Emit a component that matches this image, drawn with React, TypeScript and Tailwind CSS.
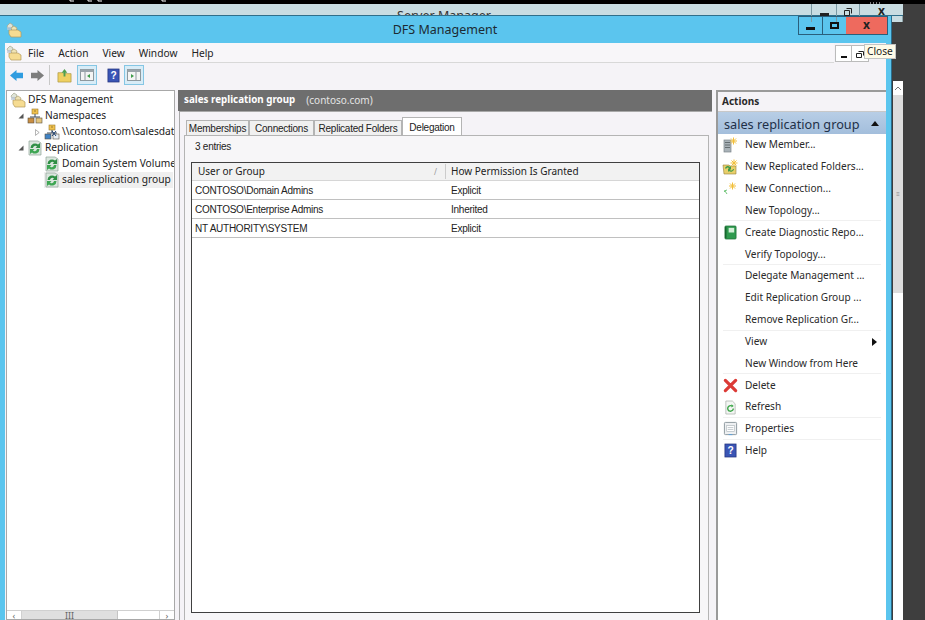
import React from 'react';

const FolderStack = ({ className = '' }: { className?: string }) => (
  <svg viewBox="0 0 16 16" className={`w-4 h-4 shrink-0 ${className}`}>
    <path d="M1 4l3-3 3 2-1 3H2z" fill="#dfe4d8" stroke="#a3a58c" strokeWidth="0.7" />
    <path d="M5 6l3-2 3 2-1 3H6z" fill="#efe3b4" stroke="#b0a274" strokeWidth="0.7" />
    <path d="M3 8h9l3 2v5H5l-2-3z" fill="#f6dc92" stroke="#b39a5c" strokeWidth="0.7" />
    <path d="M1 5h4v3H1z" fill="#b9c6d6" opacity="0.7" />
  </svg>
);

const NamespaceIcon = ({ small = false }: { small?: boolean }) => (
  <svg viewBox="0 0 16 16" className="w-4 h-4 shrink-0">
    <rect x="5" y="1" width="6" height="5" fill="#f0c24f" stroke="#9b7b2d" strokeWidth="0.6" />
    <path d="M7 3h2" stroke="#7a5f20" strokeWidth="0.7" />
    <path d="M8 6v3M3 9h10" stroke="#3a4a5c" strokeWidth="1" />
    <rect x="1" y="10" width="6" height="5" fill={small ? '#3f83c6' : '#c98e42'} stroke="#5a5040" strokeWidth="0.6" />
    <rect x="9" y="10" width="6" height="5" fill={small ? '#e6eef6' : '#e4c67e'} stroke="#5a5040" strokeWidth="0.6" />
    {small && <path d="M8 7l4 5M12 7l-4 5" stroke="#1c3f70" strokeWidth="1" />}
  </svg>
);

const ReplicationIcon = () => (
  <svg viewBox="0 0 16 16" className="w-4 h-4 shrink-0">
    <path d="M2 1h9l3 2v12H2z" fill="#dbe6de" stroke="#8fa39a" strokeWidth="0.7" />
    <path d="M3.500 8a4.500 4.500 0 0 1 7.500-3.400L13 3v5H8.500l1.500-1.500A2.400 2.400 0 0 0 6 8z" fill="#2f8f45" />
    <path d="M12.500 9a4.500 4.500 0 0 1-7.500 3.400L3 14V9h4.500L6 10.500A2.400 2.400 0 0 0 10 9z" fill="#3ea653" />
  </svg>
);

const HelpIcon = () => (
  <svg viewBox="0 0 14 16" className="w-[13px] h-[15px] shrink-0">
    <rect x="1" y="1" width="12" height="14" fill="#3a55b5" stroke="#24357f" strokeWidth="0.8" />
    <text x="7" y="12" textAnchor="middle" fontSize="11" fontWeight="700" fill="#fff" fontFamily="'Liberation Sans', sans-serif">?</text>
  </svg>
);

const PaneIcon = ({ right = false }: { right?: boolean }) => (
  <div className="w-5 h-5 border border-[#85c6e4] bg-[#d8ecf7] flex items-center justify-center">
    <svg viewBox="0 0 14 12" className="w-[14px] h-3">
      <rect x="0.500" y="0.500" width="13" height="11" fill="#f4f4f4" stroke="#8d989e" />
      <rect x="0.500" y="0.500" width="13" height="2.500" fill="#9aa4aa" />
      <path d={right ? 'M9 3v8' : 'M5 3v8'} stroke="#8d989e" />
      <path d={right ? 'M4 5l3 2-3 2z' : 'M10 5l-3 2 3 2z'} fill="#3f9b4a" />
    </svg>
  </div>
);

const Arrow = ({ dir, color }: { dir: 'left' | 'right'; color: string }) => (
  <svg viewBox="0 0 16 14" className="w-[15px] h-[13px]">
    <path d={dir === 'left' ? 'M1 7l7-6v3h7v6H8v3z' : 'M15 7L8 1v3H1v6h7v3z'} fill={color} />
  </svg>
);

const Star = ({ x = 11, y = 4 }: { x?: number; y?: number }) => (
  <path
    d={`M${x} ${y - 3.500}v7M${x - 3.500} ${y}h7M${x - 2.500} ${y - 2.500}l5 5M${x + 2.500} ${y - 2.500}l-5 5`}
    stroke="#f2bf3a"
    strokeWidth="1"
  />
);

const actionIcons: Record<string, React.ReactNode> = {
  member: (
    <svg viewBox="0 0 16 16" className="w-4 h-4">
      <rect x="2" y="3" width="7" height="12" fill="#a9b2b8" stroke="#7b858a" strokeWidth="0.7" />
      <path d="M3 5.500h5M3 8h5M3 10.500h5" stroke="#5b6468" strokeWidth="0.9" />
      <Star x={11.500} y={4} />
    </svg>
  ),
  folders: (
    <svg viewBox="0 0 16 16" className="w-4 h-4">
      <path d="M1 6h6l1 1h6v8H2z" fill="#e8cf6a" stroke="#94803a" strokeWidth="0.6" />
      <path d="M3 9a3 3 0 0 1 5-1l1-1v3H6l1-1a2 2 0 0 0-3 1z" fill="#3f9b4a" />
      <path d="M12 10a3 3 0 0 1-5 2l-1 1v-3h3l-1 1a2 2 0 0 0 3-1z" fill="#3f9b4a" />
      <Star x={12} y={4} />
    </svg>
  ),
  connection: (
    <svg viewBox="0 0 16 16" className="w-4 h-4">
      <path d="M2 10l3-1M3 10l2 3M2 10l1 1" stroke="#74c67c" strokeWidth="1" />
      <Star x={10.500} y={5} />
    </svg>
  ),
  report: (
    <svg viewBox="0 0 14 16" className="w-[13px] h-[15px]">
      <rect x="1" y="1" width="12" height="14" rx="1" fill="#2f9a4e" stroke="#1c6e35" strokeWidth="0.8" />
      <rect x="5" y="3" width="6" height="5" fill="#d4efd8" />
      <path d="M2 2v12" stroke="#0f4f22" strokeWidth="1" />
    </svg>
  ),
  delete: (
    <svg viewBox="0 0 16 16" className="w-[15px] h-[15px]">
      <path d="M2.500 2.500L13.500 13.500M13.500 2.500L2.500 13.500" stroke="#dc3a36" strokeWidth="3.400" strokeLinecap="round" />
    </svg>
  ),
  refresh: (
    <svg viewBox="0 0 14 16" className="w-[13px] h-[15px]">
      <path d="M2 1h7l3 3v11H2z" fill="#f4f6f4" stroke="#aab2ac" strokeWidth="0.8" />
      <path d="M10 9a3 3 0 1 1-1.500-2.600" stroke="#3ca648" strokeWidth="1.500" fill="none" />
      <path d="M8 4.500l2.500 2-2.500 1.500z" fill="#3ca648" />
    </svg>
  ),
  properties: (
    <svg viewBox="0 0 16 16" className="w-[15px] h-[15px]">
      <rect x="1.500" y="1.500" width="13" height="13" rx="1" fill="#eef0f2" stroke="#8a959c" />
      <rect x="4" y="5" width="8" height="6" fill="#fff" stroke="#a5aeb4" strokeWidth="0.6" />
      <path d="M5 7h6M5 9h6" stroke="#9aa4ab" strokeWidth="0.6" />
      <path d="M6 14.500h4" stroke="#5aa0d8" strokeWidth="1" />
    </svg>
  ),
  help: <HelpIcon />,
};

type ActionItem = { label: string; icon?: string; sep?: boolean; sub?: boolean };

const actions: ActionItem[] = [
  { label: 'New Member...', icon: 'member' },
  { label: 'New Replicated Folders...', icon: 'folders' },
  { label: 'New Connection...', icon: 'connection' },
  { label: 'New Topology...', sep: true },
  { label: 'Create Diagnostic Repo...', icon: 'report' },
  { label: 'Verify Topology...', sep: true },
  { label: 'Delegate Management ...' },
  { label: 'Edit Replication Group ...' },
  { label: 'Remove Replication Gr...', sep: true },
  { label: 'View', sub: true },
  { label: 'New Window from Here', sep: true },
  { label: 'Delete', icon: 'delete' },
  { label: 'Refresh', icon: 'refresh', sep: true },
  { label: 'Properties', icon: 'properties', sep: true },
  { label: 'Help', icon: 'help' },
];

const rows = [
  ['CONTOSO\\Domain Admins', 'Explicit'],
  ['CONTOSO\\Enterprise Admins', 'Inherited'],
  ['NT AUTHORITY\\SYSTEM', 'Explicit'],
];

const tabs = [
  { name: 'Memberships', w: 'w-[63px]' },
  { name: 'Connections', w: 'w-[65px]' },
  { name: 'Replicated Folders', w: 'w-[88px]' },
];

const TreeRow = ({ indent, caret, icon, label, selected }: { indent: string; caret?: 'open' | 'closed'; icon: React.ReactNode; label: string; selected?: boolean }) => (
  <div className={`flex items-center h-4 whitespace-nowrap ${indent}`}>
    {caret && (
      <span className="w-[13px] shrink-0 flex justify-center">
        {caret === 'open' ? (
          <svg viewBox="0 0 6 6" className="w-[6px] h-[6px]"><path d="M5.500 0.500V5.500H0.500z" fill="#555" /></svg>
        ) : (
          <svg viewBox="0 0 6 8" className="w-[5px] h-[7px]"><path d="M0.500 0.500L5 4 0.500 7.500z" fill="#fff" stroke="#888" strokeWidth="0.8" /></svg>
        )}
      </span>
    )}
    <div className={`flex items-center gap-[1px] flex-1 min-w-0 h-4 ${selected ? 'bg-[#efefef]' : ''}`}>
      {icon}
      <span className="ml-[1px]">{label}</span>
    </div>
  </div>
);

export default function App() {
  return (
    <div className="relative w-[925px] h-[620px] overflow-hidden bg-[#3e3e3e] font-['Noto_Sans',sans-serif] text-[#222]">
      {/* black strip on top of the shot, only descenders of a cut-off line show */}
      <div className="h-1 bg-black">
        <svg viewBox="0 0 925 4" className="w-[925px] h-1">
          <path d="M70 0v1h4M88 0v1h4M98 0v1h4M162 0v1h4M870 3h1M873 3h1M876 3h1M879 3h1" stroke="#fff" strokeWidth="1" />
        </svg>
      </div>

      <div className="flex h-[616px]">
        <div className="flex flex-col w-[903px] shrink-0">
          {/* server manager window behind */}
          <div className="h-3 shrink-0 bg-[#c9dde2] overflow-hidden border-b border-[#2f6f8a]">
            <div className="text-center text-[12.500px] leading-[18px] pt-[3px] w-[888px] text-[#333]">Server Manager</div>
          </div>

          <div className="flex flex-1 min-h-0">
            {/* DFS window */}
            <div className="w-[892px] shrink-0 flex flex-col bg-[#5bc5ee] border-r border-[#2a6d8c]">
              <div className="h-[27px] shrink-0 flex items-center pl-[6px] relative">
                <FolderStack />
                <div className="absolute inset-x-0 top-[5px] text-center text-[12.500px] pr-[1px] text-[#1c2b33]">DFS Management</div>
              </div>

              <div className="flex-1 min-h-0 flex flex-col ml-[5px] mr-[5px] bg-[#f5f3f7]">
                {/* menu */}
                <div className="h-5 shrink-0 flex items-center text-[10.200px] border-b border-[#d8d8d8] mr-[52px] bg-white/30">
                  <FolderStack className="ml-[1px]" />
                  <div className="flex gap-[14px] ml-[6px] pt-[2px]">
                    <span>File</span>
                    <span>Action</span>
                    <span>View</span>
                    <span>Window</span>
                    <span>Help</span>
                  </div>
                </div>

                {/* toolbar */}
                <div className="h-[27px] shrink-0 flex items-start pt-[2px] pl-[4px]">
                  <div className="h-5 flex items-center">
                    <Arrow dir="left" color="#2f9ce0" />
                    <span className="w-[6px]" />
                    <Arrow dir="right" color="#7d7d7d" />
                    <span className="w-px h-5 bg-[#c8c8c8] ml-[4px] mr-[7px]" />
                    <svg viewBox="0 0 16 16" className="w-[15px] h-[15px] mr-[5px]">
                      <path d="M1 5h5l1 1h8v9H1z" fill="#efd062" stroke="#a8923c" strokeWidth="0.7" />
                      <path d="M8 1l3 4H9v4H7V5H5z" fill="#4fa04f" />
                    </svg>
                    <PaneIcon />
                    <span className="w-[10px]" />
                    <HelpIcon />
                    <span className="w-[4px]" />
                    <PaneIcon right />
                  </div>
                </div>

                {/* three panes */}
                <div className="flex-1 min-h-0 flex">
                  {/* tree */}
                  <div className="w-[169px] shrink-0 flex flex-col bg-white border border-[#a8a8a8] ml-[1px] text-[10.200px] overflow-hidden">
                    <div className="flex-1 pt-px pl-[3px] pr-px overflow-hidden">
                      <TreeRow indent="" icon={<FolderStack />} label="DFS Management" />
                      <TreeRow indent="pl-[4px]" caret="open" icon={<NamespaceIcon />} label="Namespaces" />
                      <TreeRow indent="pl-[21px]" caret="closed" icon={<NamespaceIcon small />} label="\\contoso.com\salesdata" />
                      <TreeRow indent="pl-[4px]" caret="open" icon={<ReplicationIcon />} label="Replication" />
                      <TreeRow indent="pl-[34px]" icon={<ReplicationIcon />} label="Domain System Volume" />
                      <TreeRow indent="pl-[34px]" icon={<ReplicationIcon />} label="sales replication group" selected />
                    </div>
                    <div className="h-[9px] shrink-0 flex text-[#666] text-[9px] leading-[9px] border-t border-[#d0d0d0]">
                      <span className="w-[15px] border-r border-[#d0d0d0] text-center">‹</span>
                      <span className="w-[96px] bg-[#dfdfdf] border-r border-[#c4c4c4] text-center">III</span>
                      <span className="flex-1" />
                      <span className="w-[15px] border-l border-[#d0d0d0] text-center">›</span>
                    </div>
                  </div>

                  {/* center */}
                  <div className="w-[534px] shrink-0 ml-[3px] flex flex-col">
                    <div className="h-[21px] shrink-0 bg-[#6e6e6e] flex items-center pl-[6px] text-[10px] text-white whitespace-nowrap">
                      <span className="font-bold text-[9.800px]">sales replication group</span>
                      <span className="ml-[11px] text-[#e4e4e4]">(contoso.com)</span>
                    </div>
                    <div className="flex-1 min-h-0 flex flex-col ml-px pl-[4px] pr-[3px] pt-[5px] font-['Liberation_Sans',sans-serif] text-[10px] tracking-[-0.25px] border-l border-t border-[#a8a8a8]">
                      <div className="flex items-end h-[19px] shrink-0 pl-[2px]">
                        {tabs.map((t) => (
                          <div key={t.name} className={`${t.w} h-[16px] flex items-center justify-center border border-b-0 border-[#b4b4b4] bg-[#f0f0f0] whitespace-nowrap`}>
                            {t.name}
                          </div>
                        ))}
                        <div className="w-[60px] h-[19px] flex justify-center pt-[2px] border border-b-0 border-[#b4b4b4] bg-white">Delegation</div>
                      </div>
                      <div className="flex-1 min-h-0 flex flex-col border-l border-r border-t border-[#b4b4b4] -mt-px pl-[6px] pr-[8px] pb-[7px] bg-[#f7f6f8]">
                        <div className="h-[26px] shrink-0 flex items-start pt-[3px] pl-[4px]">3 entries</div>
                        <div className="flex-1 min-h-0 bg-white border border-[#404040] flex flex-col">
                          <div className="h-[18px] shrink-0 flex bg-[#f2f2f2] border-b border-[#d6d6d6] font-['Noto_Sans',sans-serif] text-[10px] tracking-normal">
                            <div className="w-[254px] flex items-center justify-between pl-[6px] pr-[8px] border-r border-[#cccccc] my-px">
                              <span>User or Group</span>
                              <span className="text-[#999] text-[8px]">/</span>
                            </div>
                            <div className="flex items-center pl-[5px]">How Permission Is Granted</div>
                          </div>
                          {rows.map(([who, how]) => (
                            <div key={who} className="h-[19px] shrink-0 flex items-center border-b border-[#c0c0c0]">
                              <span className="w-[255px] pl-[3px]">{who}</span>
                              <span className="pl-[4px]">{how}</span>
                            </div>
                          ))}
                        </div>
                      </div>
                    </div>
                  </div>

                  {/* actions */}
                  <div className="flex-1 min-w-0 ml-[4px] flex flex-col border-l-2 border-t-2 border-[#9a9a9a] text-[#2a2a2a]">
                    <div className="h-[20px] shrink-0 flex items-center pl-[4px] text-[10px] font-bold border-b border-[#c8c8c8]">Actions</div>
                    <div className="h-[22px] shrink-0 bg-gradient-to-b from-[#b8cee6] to-[#a3bedc] flex items-center justify-between pl-[6px] pr-[7px] text-[12.700px] text-[#1e3048] whitespace-nowrap">
                      <span className="pt-[3px]">sales replication group</span>
                      <svg viewBox="0 0 8 5" className="w-2 h-[5px]"><path d="M0 5l4-5 4 5z" fill="#111" /></svg>
                    </div>
                    <div className="flex-1 bg-white text-[10.100px]">
                      {actions.map((a) => (
                        <div key={a.label} className="h-[21.850px] flex items-center whitespace-nowrap relative">
                          <span className="w-[27px] shrink-0 flex justify-center pr-[3px]">{a.icon && actionIcons[a.icon]}</span>
                          <span>{a.label}</span>
                          {a.sep && <span className="absolute left-[5px] right-[5px] bottom-0 h-px bg-[#f0f0f0]" />}
                          {a.sub && (
                            <svg viewBox="0 0 5 8" className="w-[5px] h-2 absolute right-[9px] top-[7px]"><path d="M0 0l5 4-5 4z" fill="#111" /></svg>
                          )}
                        </div>
                      ))}
                    </div>
                  </div>
                </div>
              </div>
            </div>
          </div>
        </div>
      </div>

      {/* right strip of the window behind */}
      <div className="absolute left-[893px] top-[81px] w-[10px] h-[539px] bg-white flex flex-col">
        <div className="h-[14px] flex items-center justify-center">
          <svg viewBox="0 0 8 5" className="w-2 h-[5px]"><path d="M1 4l3-3 3 3" stroke="#777" fill="none" /></svg>
        </div>
        <div className="h-[198px] bg-[#dcdcdc] flex items-center justify-center text-[#888] text-[6px] leading-[2px]">≡</div>
      </div>

      <div className="absolute left-[892px] top-[16px] w-[11px] h-[6px] bg-[#c9dde2] border-r border-[#8fa4aa]" />

      {/* server manager caption buttons */}
      <div className="absolute left-[811px] top-[4px] w-[92px] h-[18px] flex">
        <div className="w-[25px] border-l border-[#7b9aa4] flex justify-center pt-[9px]"><span className="w-[9px] h-[3px] bg-[#222]" /></div>
        <div className="w-[23px] border-l border-[#7b9aa4] flex justify-center pt-[3px]">
          <svg viewBox="0 0 8 9" className="w-2 h-[9px]"><path d="M2.500 1.500h5v5M.5 3.500h5v5h-5z" stroke="#222" fill="none" /></svg>
        </div>
        <div className="flex-1 border-l border-[#7b9aa4] text-center text-[12px] leading-[14px] font-bold text-[#222]">x</div>
      </div>

      {/* DFS caption buttons */}
      <div className="absolute left-[798px] top-[16px] w-[90px] h-[19px] flex border border-[#2a5f7c]">
        <div className="w-[24px] border-r border-[#2a5f7c] flex justify-center items-end pb-[4px]"><span className="w-[9px] h-[3px] bg-[#111]" /></div>
        <div className="w-[23px] flex justify-center items-center"><span className="w-[9px] h-[7px] border-2 border-[#111]" /></div>
        <div className="flex-1 bg-[#ee6a5e] text-center text-[12px] leading-[15px] font-bold text-[#222]">x</div>
      </div>

      {/* MDI buttons + tooltip */}
      <div className="absolute left-[835px] top-[45px] h-[17px] flex">
        <div className="w-[17px] h-[17px] bg-white border border-[#bbbbbb] flex justify-center items-end pb-[3px]"><span className="w-[6px] h-[2px] bg-[#111]" /></div>
        <div className="w-[17px] h-[17px] bg-white border border-[#bbbbbb] border-l-0 flex justify-center items-center">
          <svg viewBox="0 0 8 8" className="w-2 h-2"><path d="M2.500 1.500h5v4M.5 3.500h5v4h-5z" stroke="#222" fill="none" /></svg>
        </div>
      </div>
      <div className="absolute left-[864px] top-[44px] h-[15px] px-[2px] bg-[#fffbe8] border border-[#c4c4c4] text-[10.200px] leading-[13px] text-[#222]">Close</div>
    </div>
  );
}
